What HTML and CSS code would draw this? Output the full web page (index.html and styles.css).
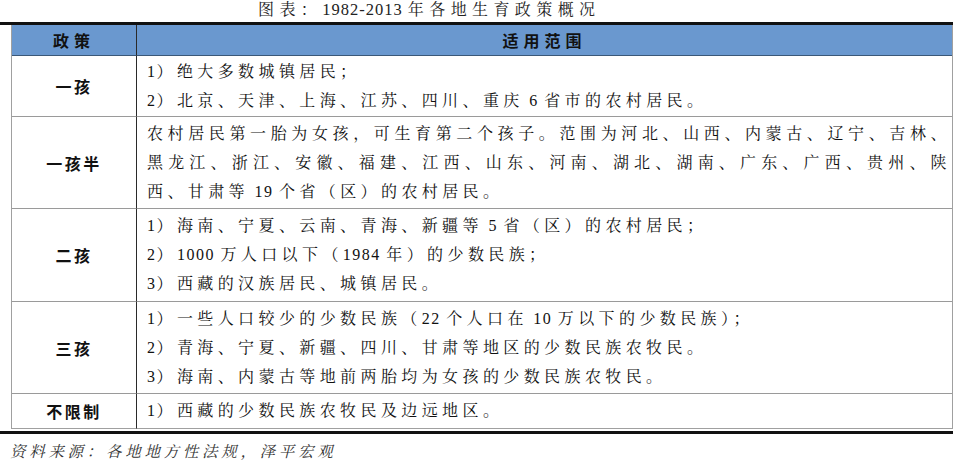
FILE: index.html
```html
<!DOCTYPE html>
<html lang="zh-CN">
<head>
<meta charset="utf-8">
<title>图表：1982-2013 年各地生育政策概况</title>
<link rel="stylesheet" href="styles.css">
</head>
<body>
<div class="page">
  <div class="title">图表：<span class="n">1982-2013 </span>年各地生育政策概况</div>
  <div class="frame">
    <table class="policy">
      <thead>
        <tr>
          <th class="lab">政策</th>
          <th class="scope">适用范围</th>
        </tr>
      </thead>
      <tbody>
        <tr class="r1">
          <td class="lab">一孩</td>
          <td class="scope">
            <div><span class="n">1</span>）绝大多数城镇居民；</div>
            <div><span class="n">2</span>）北京、天津、上海、江苏、四川、重庆<span class="n"> 6 </span>省市的农村居民。</div>
          </td>
        </tr>
        <tr>
          <td class="lab">一孩半</td>
          <td class="scope">
            <div class="jl">农村居民第一胎为女孩，可生育第二个孩子。范围为河北、山西、内蒙古、辽宁、吉林、</div>
            <div class="jl">黑龙江、浙江、安徽、福建、江西、山东、河南、湖北、湖南、广东、广西、贵州、陕</div>
            <div>西、甘肃等<span class="n"> 19 </span>个省（区）的农村居民。</div>
          </td>
        </tr>
        <tr class="r3">
          <td class="lab">二孩</td>
          <td class="scope">
            <div><span class="n">1</span>）海南、宁夏、云南、青海、新疆等<span class="n"> 5 </span>省（区）的农村居民；</div>
            <div><span class="n">2</span>）<span class="n">1000 </span>万人口以下（<span class="n">1984 </span>年）的少数民族；</div>
            <div><span class="n">3</span>）西藏的汉族居民、城镇居民。</div>
          </td>
        </tr>
        <tr>
          <td class="lab">三孩</td>
          <td class="scope">
            <div><span class="n">1</span>）一些人口较少的少数民族（<span class="n">22 </span>个人口在<span class="n"> 10 </span>万以下的少数民族）；</div>
            <div><span class="n">2</span>）青海、宁夏、新疆、四川、甘肃等地区的少数民族农牧民。</div>
            <div><span class="n">3</span>）海南、内蒙古等地前两胎均为女孩的少数民族农牧民。</div>
          </td>
        </tr>
        <tr class="r5">
          <td class="lab">不限制</td>
          <td class="scope">
            <div><span class="n">1</span>）西藏的少数民族农牧民及边远地区。</div>
          </td>
        </tr>
      </tbody>
    </table>
  </div>
  <div class="source">资料来源：各地地方性法规，泽平宏观</div>
</div>
</body>
</html>
```

FILE: styles.css
```css
html, body {
  margin: 0;
  padding: 0;
  background: #ffffff;
}

.page {
  width: 953px;
  font-family: "Liberation Serif", "Noto Serif CJK SC", "Noto Sans CJK SC", serif;
  color: #111111;
}

.title {
  height: 22px;
  padding-left: 258px;
  font-size: 16px;
  line-height: 20px;
  letter-spacing: 5.4px;
  color: #222222;
  white-space: nowrap;
}

.title .n {
  letter-spacing: 1px;
  font-size: 16.5px;
}

.frame {
  border-top: 3px solid #111111;
  border-bottom: 3px solid #111111;
  padding: 0 0 2px 11px;
}

.policy {
  width: 942px;
  border-collapse: separate;
  border-spacing: 0;
  border-left: 1px solid #a0a0a0;
  border-right: 1px solid #a0a0a0;
  table-layout: fixed;
}

.policy th {
  background: #6a98cf;
  height: 30px;
  padding: 0;
  border-bottom: 1px solid #3b5878;
  font-family: "Liberation Sans", "Noto Sans CJK SC", sans-serif;
  font-weight: 700;
  font-size: 16px;
  letter-spacing: 5px;
  color: #111111;
  text-align: center;
  vertical-align: middle;
}

.policy th.lab {
  width: 124px;
  border-right: 1px solid #2a2a2a;
}

.policy td {
  border-bottom: 1px solid #9a9a9a;
  vertical-align: middle;
}

.policy td.lab {
  width: 124px;
  padding: 0;
  border-right: 1px solid #2a2a2a;
  text-align: center;
  font-family: "Liberation Sans", "Noto Sans CJK SC", sans-serif;
  font-weight: 700;
  font-size: 16px;
  letter-spacing: 2.5px;
  color: #111111;
}

.policy tbody tr:last-child td {
  border-bottom: 1px solid #a0a0a0;
}

.policy td.scope {
  padding: 2px 5px 2px 10px;
  font-size: 16px;
  line-height: 29px;
  letter-spacing: 4.4px;
  text-align: left;
}

.policy tr.r1 td.scope {
  padding-bottom: 1px;
  line-height: 28.5px;
}

.policy tr.r3 td.scope {
  padding-bottom: 3px;
}

.policy tr.r5 td.scope {
  line-height: 30px;
}

.scope div {
  white-space: nowrap;
}

.scope .jl {
  text-align: justify;
  text-align-last: justify;
  margin-right: -4px;
}

.n {
  font-size: 16px;
  letter-spacing: 1.5px;
}

.source {
  margin-top: 8px;
  padding-left: 10px;
  font-size: 15.5px;
  line-height: 20px;
  letter-spacing: 3.7px;
  font-style: italic;
  color: #333333;
  white-space: nowrap;
}
```
